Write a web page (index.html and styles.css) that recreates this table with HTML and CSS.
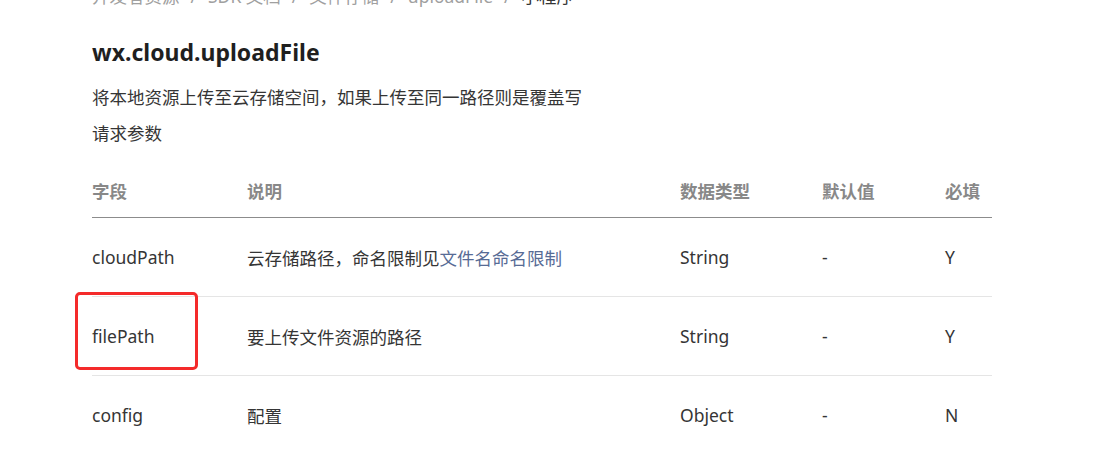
FILE: index.html
```html
<!DOCTYPE html>
<html lang="zh-CN">
<head>
    <meta charset="UTF-8">
    <meta name="viewport" content="width=device-width, initial-scale=1.0">
    <title>wx.cloud.uploadFile</title>
    <link rel="stylesheet" href="styles.css">
</head>
<body>
    <div class="page">
        <div class="crumb">
            <span>开发者资源</span><i>/</i><span>SDK 文档</span><i>/</i><span>文件存储</span><i>/</i><span>uploadFile</span><i>/</i><b>小程序</b>
        </div>
        <h1 class="title">wx.cloud.uploadFile</h1>
        <p class="desc">将本地资源上传至云存储空间，如果上传至同一路径则是覆盖写</p>
        <p class="desc sub">请求参数</p>

        <div class="tableWrap">
            <table class="params">
                <thead>
                    <tr>
                        <th class="c1">字段</th>
                        <th class="c2">说明</th>
                        <th class="c3">数据类型</th>
                        <th class="c4">默认值</th>
                        <th class="c5">必填</th>
                    </tr>
                </thead>
                <tbody>
                    <tr>
                        <td>cloudPath</td>
                        <td>云存储路径，命名限制见<a href="javascript:;">文件名命名限制</a></td>
                        <td>String</td>
                        <td>-</td>
                        <td>Y</td>
                    </tr>
                    <tr>
                        <td>filePath</td>
                        <td>要上传文件资源的路径</td>
                        <td>String</td>
                        <td>-</td>
                        <td>Y</td>
                    </tr>
                    <tr>
                        <td>config</td>
                        <td>配置</td>
                        <td>Object</td>
                        <td>-</td>
                        <td>N</td>
                    </tr>
                </tbody>
            </table>
            <!-- 截图里的红框标注 -->
            <div class="mark"></div>
        </div>
    </div>
</body>
</html>
```

FILE: styles.css
```css
*{
    margin: 0;
    padding: 0;
}
body{
    background: #fff;
    color: #353535;
    font-family: "Noto Sans", "Noto Sans CJK SC", sans-serif;
    font-size: 17.5px;
    overflow: hidden;
}
a{
    text-decoration: none;
    color: #576b95;
}
.page{
    width: 900px;
    padding-left: 92px;
}
.crumb{
    margin-top: -16px;
    height: 24px;
    line-height: 24px;
    color: #a0a0a0;
    white-space: nowrap;
}
.crumb i{
    font-style: normal;
    margin: 0 11px;
}
.crumb b{
    font-weight: normal;
    color: #353535;
}
.title{
    margin-top: 29px;
    font-size: 23px;
    line-height: 30px;
    font-weight: bold;
    color: #1f1f1f;
}
.desc{
    margin-top: 16px;
    line-height: 28px;
}
.desc.sub{
    margin-top: 8px;
}
.tableWrap{
    position: relative;
    margin-top: 20px;
}
.params{
    width: 900px;
    border-collapse: collapse;
    table-layout: fixed;
}
.params th{
    height: 47px;
    padding-bottom: 3px;
    text-align: left;
    font-weight: bold;
    color: #888;
    border-bottom: 1px solid #8c8c8c;
}
.params td{
    height: 78px;
    border-bottom: 1px solid #e5e5e5;
}
.params tbody tr:last-child td{
    border-bottom: none;
}
.params .c1{ width: 155px; }
.params .c2{ width: 433px; }
.params .c3{ width: 142px; }
.params .c4{ width: 123px; }
.params .c5{ width: 47px; }
.mark{
    position: absolute;
    left: -17px;
    top: 125px;
    width: 117px;
    height: 72px;
    border: 3px solid #f42a2a;
    border-radius: 5px;
}
```
